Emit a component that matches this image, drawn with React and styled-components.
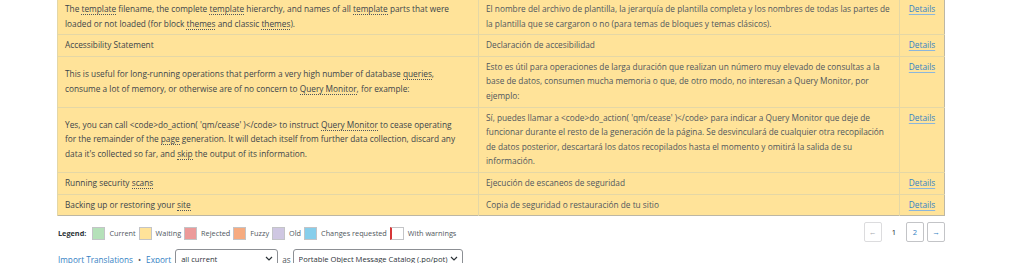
import React from 'react';
import styled, { createGlobalStyle } from 'styled-components';

const GlobalStyle = createGlobalStyle`
  html, body {
    margin: 0;
    padding: 0;
    background: #fff;
    overflow: hidden;
  }
  body {
    font-family: "Open Sans", "Noto Sans", sans-serif;
    color: #3c434a;
  }
`;

const FONT = '8.3px';

const STATUS_COLORS = {
  current: '#b5e1b9',
  waiting: '#ffe399',
  rejected: '#ec9a9a',
  fuzzy: '#f6ab80',
  old: '#cfc7e2',
  changes: '#87ceeb',
  warnings: '#ffffff',
};

const Page = styled.div`
  width: 888px;
  margin: -2px 0 0 57px;
`;

const Table = styled.table`
  width: 100%;
  border-collapse: collapse;
  table-layout: fixed;
  border: 1px solid #bdb7a4;
  font-size: ${FONT};
  line-height: 14.6px;
`;

const Row = styled.tr`
  background: ${p => STATUS_COLORS[p.$status]};
  border-top: 1px solid #e4d7a6;
`;

const Cell = styled.td`
  padding: ${p => (p.$kind === 'original' ? '3px 16px 3px 7px' : '3px 7px')};
  border-left: 1px solid #e4d7a6;
  vertical-align: ${p => (p.$kind === 'original' ? 'middle' : 'top')};
  color: ${p => (p.$kind === 'translation' ? '#50575e' : '#3c434a')};
  text-align: ${p => (p.$kind === 'actions' ? 'center' : 'left')};
  word-wrap: break-word;
`;

const Term = styled.span`
  border-bottom: 1px dotted #50575e;
`;

const DetailsLink = styled.a`
  color: #3582c4;
  text-decoration: underline;
  text-decoration-color: #8bb6dc;
  text-underline-offset: 2px;
  cursor: pointer;
`;

const Toolbar = styled.div`
  display: flex;
  justify-content: space-between;
  align-items: center;
  margin-top: 6px;
  height: 19px;
`;

const Legend = styled.div`
  display: flex;
  align-items: center;
  font-size: 7.3px;
  color: #50575e;
  padding: 3px 0 0 1px;
`;

const LegendTitle = styled.strong`
  font-weight: 700;
  color: #2c3338;
  margin-right: 4px;
`;

const Swatch = styled.span`
  display: inline-block;
  width: 11px;
  height: 11px;
  margin: 0 4px 0 2px;
  background: ${p => STATUS_COLORS[p.$status]};
  border: 1px solid #c3c4c7;
  border-left: ${p => (p.$status === 'warnings' ? '2px solid #d63638' : '1px solid #c3c4c7')};
`;

const LegendLabel = styled.span`
  margin-right: 1px;
`;

const Pager = styled.div`
  display: flex;
  align-items: center;
  gap: 3px;
  font-size: 7.6px;
`;

const PageButton = styled.span`
  display: inline-flex;
  align-items: center;
  justify-content: center;
  width: 16px;
  height: 18px;
  border: 1px solid ${p => (p.$disabled ? '#dcdcde' : '#c3c4c7')};
  border-radius: 2px;
  background: #fff;
  color: ${p => (p.$disabled ? '#a7aaad' : '#3582c4')};
`;

const CurrentPage = styled.span`
  padding: 0 7px;
  color: #1d2327;
`;

const Footer = styled.div`
  display: flex;
  align-items: center;
  margin-top: 8px;
  font-size: 8.2px;
  color: #50575e;
  padding-left: 1px;
`;

const FooterLink = styled.a`
  color: #3582c4;
  text-decoration: none;
`;

const Bullet = styled.span`
  margin: 0 5px;
  color: #50575e;
`;

const SelectWrap = styled.div`
  position: relative;
  width: ${p => p.$width}px;
  margin-left: ${p => p.$gap || 0}px;
`;

const Select = styled.select`
  appearance: none;
  width: 100%;
  height: 20px;
  padding: 0 13px 0 5px;
  border: 1px solid #8c8f94;
  border-radius: 3px;
  background: #fff;
  font-family: "Open Sans", "Noto Sans", sans-serif;
  font-size: 7.6px;
  color: #2c3338;
`;

const Chevron = styled.svg`
  position: absolute;
  right: 5px;
  top: 7px;
  pointer-events: none;
`;

const As = styled.span`
  margin: 0 2px 0 4px;
`;

const rows = [
  {
    status: 'waiting',
    original:
      'The {template} filename, the complete {template} hierarchy, and names of all {template} parts that were loaded or not loaded (for block {themes} and classic {themes}).',
    translation:
      'El nombre del archivo de plantilla, la jerarquía de plantilla completa y los nombres de todas las partes de la plantilla que se cargaron o no (para temas de bloques y temas clásicos).',
  },
  {
    status: 'waiting',
    original: 'Accessibility Statement',
    translation: 'Declaración de accesibilidad',
  },
  {
    status: 'waiting',
    original:
      'This is useful for long-running operations that perform a very high number of database {queries}, consume a lot of memory, or otherwise are of no concern to {Query Monitor}, for example:',
    translation:
      'Esto es útil para operaciones de larga duración que realizan un número muy elevado de consultas a la base de datos, consumen mucha memoria o que, de otro modo, no interesan a Query Monitor, por ejemplo:',
  },
  {
    status: 'waiting',
    original:
      "Yes, you can call <code>do_action( 'qm/cease' )</code> to instruct {Query Monitor} to cease operating for the remainder of the {page} generation. It will detach itself from further data collection, discard any data it's collected so far, and {skip} the output of its information.",
    translation:
      "Sí, puedes llamar a <code>do_action( 'qm/cease' )</code> para indicar a Query Monitor que deje de funcionar durante el resto de la generación de la página. Se desvinculará de cualquier otra recopilación de datos posterior, descartará los datos recopilados hasta el momento y omitirá la salida de su información.",
  },
  {
    status: 'waiting',
    original: 'Running security {scans}',
    translation: 'Ejecución de escaneos de seguridad',
  },
  {
    status: 'waiting',
    original: 'Backing up or restoring your {site}',
    translation: 'Copia de seguridad o restauración de tu sitio',
  },
];

const legend = [
  ['current', 'Current'],
  ['waiting', 'Waiting'],
  ['rejected', 'Rejected'],
  ['fuzzy', 'Fuzzy'],
  ['old', 'Old'],
  ['changes', 'Changes requested'],
  ['warnings', 'With warnings'],
];

// glossary terms are wrapped in {braces}
function withTerms(text) {
  return text.split(/(\{[^}]+\})/).map((part, i) =>
    part.startsWith('{') ? <Term key={i}>{part.slice(1, -1)}</Term> : part
  );
}

function ChevronDown() {
  return (
    <Chevron width="8" height="5" viewBox="0 0 8 5">
      <path d="M1 1l3 3 3-3" fill="none" stroke="#2c3338" strokeWidth="1.2" />
    </Chevron>
  );
}

export default function App() {
  return (
    <>
      <GlobalStyle />
      <Page>
        <Table>
          <colgroup>
            <col style={{ width: 421 }} />
            <col style={{ width: 421 }} />
            <col style={{ width: 45 }} />
          </colgroup>
          <tbody>
            {rows.map((row, i) => (
              <Row key={i} $status={row.status}>
                <Cell $kind="original">{withTerms(row.original)}</Cell>
                <Cell $kind="translation">{row.translation}</Cell>
                <Cell $kind="actions">
                  <DetailsLink>Details</DetailsLink>
                </Cell>
              </Row>
            ))}
          </tbody>
        </Table>

        <Toolbar>
          <Legend>
            <LegendTitle>Legend:</LegendTitle>
            {legend.map(([status, label]) => (
              <React.Fragment key={status}>
                <Swatch $status={status} />
                <LegendLabel>{label}</LegendLabel>
              </React.Fragment>
            ))}
          </Legend>
          <Pager>
            <PageButton $disabled>←</PageButton>
            <CurrentPage>1</CurrentPage>
            <PageButton>2</PageButton>
            <PageButton>→</PageButton>
          </Pager>
        </Toolbar>

        <Footer>
          <FooterLink>Import Translations</FooterLink>
          <Bullet>•</Bullet>
          <FooterLink>Export</FooterLink>
          <SelectWrap $width={103} $gap={4}>
            <Select defaultValue="all">
              <option value="all">all current</option>
            </Select>
            <ChevronDown />
          </SelectWrap>
          <As>as</As>
          <SelectWrap $width={170}>
            <Select defaultValue="po">
              <option value="po">Portable Object Message Catalog (.po/pot)</option>
            </Select>
            <ChevronDown />
          </SelectWrap>
        </Footer>
      </Page>
    </>
  );
}
